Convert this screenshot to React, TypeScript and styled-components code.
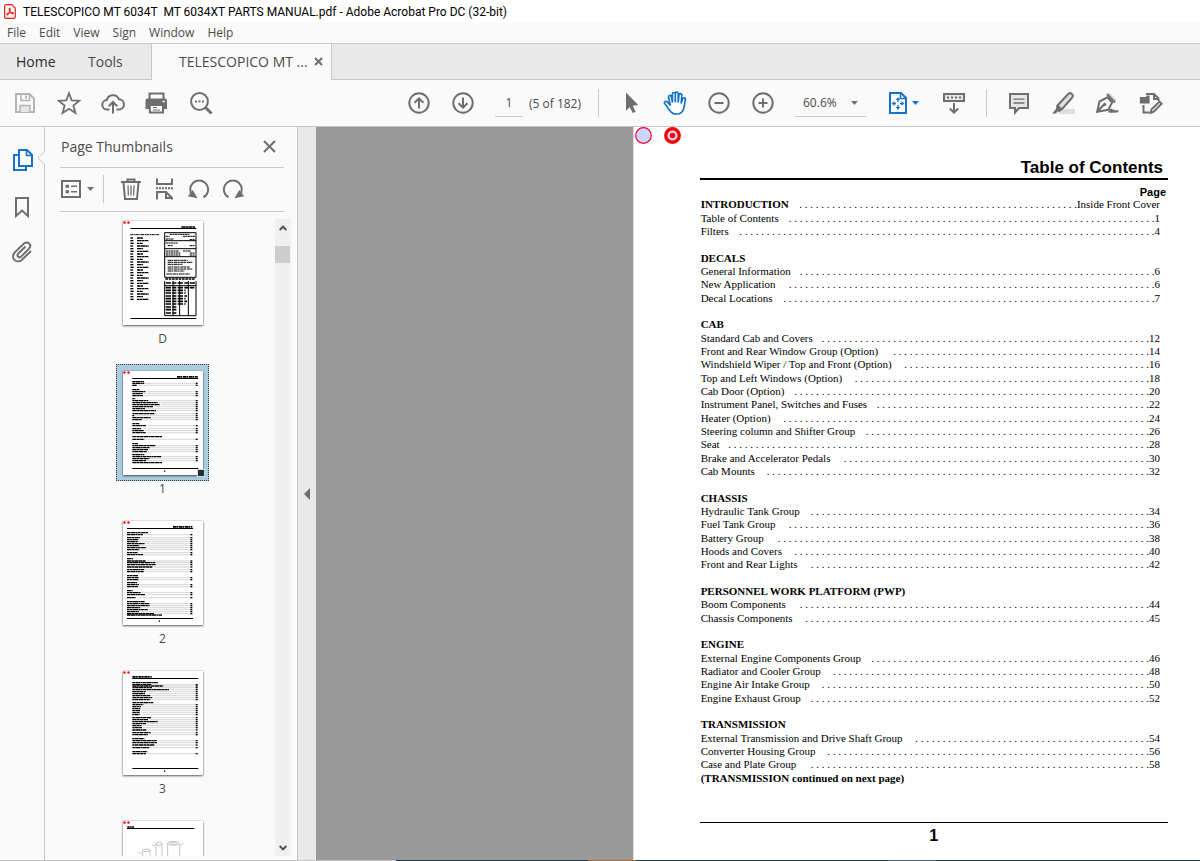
import React from "react";
import styled, { createGlobalStyle, css } from "styled-components";

const ui = `"Open Sans", "Noto Sans", sans-serif`;
const caption = `Roboto, "Open Sans", sans-serif`;
const arial = `"Liberation Sans", Arial, sans-serif`;
const times = `"Liberation Serif", "Times New Roman", serif`;

const color = {
  chrome: "#fafafa",
  bar: "#e9e9e9",
  line: "#c8c8c8",
  icon: "#6e6e6e",
  blue: "#1473c8",
  text: "#4b4b4b",
  canvas: "#999999",
};

const GlobalStyle = createGlobalStyle`
  *, *::before, *::after { box-sizing: border-box; }
  body { margin: 0; font-family: ${ui}; color: ${color.text}; overflow: hidden; }
  button, input, select { font: inherit; color: inherit; border: 0; padding: 0; margin: 0; background: none; border-radius: 0; }
  ul, ol { list-style: none; margin: 0; padding: 0; }
  h1, h2, h3, p { margin: 0; font: inherit; }
  a { color: inherit; text-decoration: none; }
  svg { display: block; }
`;

/* ---------- window frame ---------- */

const Window = styled.div`
  display: flex;
  flex-direction: column;
  height: 100vh;
  background: ${color.chrome};
`;

const TitleBar = styled.header`
  display: flex;
  align-items: center;
  gap: 7px;
  height: 23px;
  padding-left: 4px;
  background: #fff;
  color: #000;
  font-family: ${caption};
  font-size: 12px;
  white-space: pre;
`;

const MenuBar = styled.nav`
  display: flex;
  align-items: center;
  gap: 13px;
  height: 20px;
  padding: 0 0 2px 7px;
  font-size: 12px;
`;

const TabBar = styled.div`
  display: flex;
  height: 37px;
  border-top: 1px solid ${color.line};
  background: ${color.bar};
`;

const Tab = styled.button<{ $width: number; $dark?: boolean }>`
  width: ${(p) => p.$width}px;
  border-bottom: 1px solid ${color.line};
  font-size: 14px;
  text-align: left;
  color: ${(p) => (p.$dark ? "#2b2b2b" : color.text)};
  padding-left: 16px;
`;

const DocumentTab = styled.div`
  display: flex;
  align-items: center;
  justify-content: space-between;
  width: 181px;
  padding: 0 8px 2px 27px;
  border-left: 1px solid ${color.line};
  border-right: 1px solid ${color.line};
  background: ${color.chrome};
  font-size: 14px;
`;

const TabRest = styled.div`
  flex: 1;
  border-bottom: 1px solid ${color.line};
`;

const Toolbar = styled.div`
  display: flex;
  align-items: center;
  justify-content: space-between;
  height: 47px;
  padding: 0 27px 0 3px;
  border-bottom: 1px solid ${color.line};
`;

const ToolGroup = styled.div`
  display: flex;
  align-items: center;
`;

const ToolButton = styled.button<{ $active?: boolean; $dim?: boolean }>`
  display: flex;
  align-items: center;
  justify-content: center;
  width: 44px;
  height: 36px;
  color: ${(p) => (p.$active ? color.blue : p.$dim ? "#b4b4b4" : color.icon)};
`;

const PlainButton = styled.button`
  display: flex;
  align-items: center;
  justify-content: center;
  color: ${color.icon};
`;

const Separator = styled.span<{ $left: number; $right: number }>`
  width: 1px;
  height: 28px;
  margin: 0 ${(p) => p.$right}px 0 ${(p) => p.$left}px;
  background: ${color.line};
`;

const field = css`
  height: 28px;
  border-bottom: 1px solid ${color.line};
  font-size: 12px;
  outline: 0;
`;

const PageField = styled.input`
  ${field}
  width: 28px;
  margin-left: 10px;
  text-align: center;
`;

const PageCount = styled.span`
  width: 50px;
  margin-left: 6px;
  font-size: 12px;
  white-space: nowrap;
`;

const ZoomBox = styled.div`
  display: grid;
  align-items: center;
  width: 71px;
  margin: 0 16px 0 10px;
  & > * { grid-area: 1 / 1; }
  & > svg { justify-self: end; margin-right: 8px; pointer-events: none; color: ${color.icon}; }
`;

const ZoomSelect = styled.select`
  ${field}
  appearance: none;
  width: 100%;
  padding-left: 8px;
`;

const FitButton = styled(ToolButton)`
  gap: 5px;
  margin-right: 6px;
`;

/* ---------- left side ---------- */

const Workspace = styled.div`
  display: flex;
  flex: 1;
  min-height: 0;
`;

const Rail = styled.nav`
  position: relative;
  display: flex;
  flex-direction: column;
  align-items: center;
  flex: 0 0 45px;
  gap: 22px;
  padding-top: 21px;
  border-right: 1px solid ${color.line};
`;

const RailButton = styled.button<{ $active?: boolean }>`
  display: flex;
  color: ${(p) => (p.$active ? color.blue : color.icon)};
`;

const Notch = styled.svg`
  position: absolute;
  right: -1px;
  top: 24px;
`;

const Panel = styled.aside`
  display: flex;
  flex-direction: column;
  flex: 0 0 253px;
  min-height: 0;
  border-right: 1px solid ${color.line};
`;

const PanelHeader = styled.div`
  display: flex;
  align-items: center;
  justify-content: space-between;
  height: 41px;
  margin: 0 13px 0 15px;
  padding: 0 8px 2px 1px;
  border-bottom: 1px solid ${color.line};
  font-size: 14px;
`;

const PanelTools = styled.div`
  display: flex;
  align-items: center;
  height: 44px;
  margin: 0 13px 0 15px;
  padding: 0 0 2px 1px;
  border-bottom: 1px solid ${color.line};
`;

const OptionsButton = styled(PlainButton)`
  gap: 6px;
`;

const PanelToolRow = styled.div`
  display: flex;
  gap: 10px;
`;

const ThumbArea = styled.div`
  display: flex;
  flex: 1;
  min-height: 0;
  margin-bottom: 4px;
`;

const ThumbList = styled.ul`
  flex: 1;
  overflow: hidden;
  padding: 2px 0 0 5px;
`;

const ThumbItem = styled.li`
  display: flex;
  flex-direction: column;
  align-items: center;
  padding-bottom: 17px;
  font-size: 12px;
  line-height: 16px;
`;

const ThumbFrame = styled.button<{ $selected?: boolean }>`
  position: relative;
  padding: 6px 5px 5px 6px;
  border: 1px dotted ${(p) => (p.$selected ? "#333" : "transparent")};
  background: ${(p) => (p.$selected ? "#abcde0" : "none")};
`;

const Sheet = styled.svg`
  width: 80px;
  height: 104px;
  background: #fff;
  box-shadow: 0 0 1px rgba(0, 0, 0, 0.4), 0 1px 2px rgba(0, 0, 0, 0.6);
`;

const ViewHandle = styled.span`
  position: absolute;
  right: 3px;
  bottom: 3px;
  width: 8px;
  height: 8px;
  border: 1px solid #c8dcea;
  background: #2b2b2b;
`;

const ScrollTrack = styled.div`
  display: flex;
  flex-direction: column;
  width: 16px;
  margin: 7px 6px 0 0;
  background: #f0f0f0;
`;

const ScrollButton = styled(PlainButton)`
  height: 17px;
  color: #505050;
`;

const ScrollThumb = styled.div`
  flex: 0 0 17px;
  margin: 10px 1px auto 0;
  background: #cdcdcd;
`;

const PanelHandle = styled.button`
  display: flex;
  align-items: center;
  justify-content: center;
  flex: 0 0 18px;
  background: #e8e8e8;
  color: ${color.icon};
`;

/* ---------- document ---------- */

const Canvas = styled.main`
  display: flex;
  flex: 1;
  min-width: 0;
  background: ${color.canvas};
`;

const Backdrop = styled.div`
  flex: 317 1 0;
`;

const Paper = styled.article`
  display: flex;
  flex-direction: column;
  flex: 567 1 0;
  min-width: 0;
  border-left: 1px solid #dcdcdc;
  background: #fff;
  color: #000;
`;

const Marks = styled.div`
  display: flex;
  gap: 12px;
  padding-left: 1px;
`;

const SheetBody = styled.div`
  display: flex;
  flex-direction: column;
  flex: 1;
  margin: 14px 32px 14px 66px;
`;

const DocTitle = styled.h1`
  padding-right: 5px;
  border-bottom: 2px solid #000;
  font: bold 17px/20px ${arial};
  text-align: right;
`;

const PageHeading = styled.p`
  margin-top: 6px;
  padding-right: 2px;
  font: bold 11px/12px ${arial};
  text-align: right;
`;

const Toc = styled.ol`
  display: grid;
  grid-template-columns: minmax(0, 1fr);
  grid-auto-rows: 1fr;
  flex: 1;
  padding: 0 8px 0 1px;
  font: 11px/13px ${times};
`;

const TocRow = styled.li<{ $bold?: boolean }>`
  display: flex;
  align-items: center;
  white-space: pre;
  & > a:first-child { font-weight: ${(p) => (p.$bold ? "bold" : "normal")}; }
`;

const Leader = styled.span`
  margin-left: auto;
`;

const PageFoot = styled.footer`
  margin-top: 37px;
  padding-top: 3px;
  border-top: 1px solid #000;
  font: bold 16px/20px ${arial};
  text-align: center;
`;

const BottomEdge = styled.div`
  height: 1px;
  background: linear-gradient(
    to right,
    #c4c4c4 33%, #1c3745 33% 49%, #b0682c 49% 53%, #1c3745 53% 74%, #4c6068 74% 78%, #1c3745 78%
  );
`;

/* ---------- icons ---------- */

const Icon = ({ children, w = 24, h = 24, sw = 2 }: { children: React.ReactNode; w?: number; h?: number; sw?: number }) => (
  <svg width={w} height={h} viewBox={`0 0 ${w} ${h}`} fill="none" stroke="currentColor" strokeWidth={sw} aria-hidden="true">
    {children}
  </svg>
);

const Caret = () => (
  <Icon w={7} h={4}><path d="M0 0h7L3.500 4z" fill="currentColor" stroke="none" /></Icon>
);

const PdfIcon = () => (
  <svg width="12" height="15" viewBox="0 0 12 15" fill="none" stroke="#e0261b" aria-hidden="true">
    <path d="M2 .7h5.800l3.500 3.500v8.600a1.500 1.500 0 0 1-1.500 1.500H2A1.400 1.400 0 0 1 .6 12.900V2.100A1.400 1.400 0 0 1 2 .7z" fill="#fff1f0" strokeWidth="1.200" />
    <path d="M5.600 4.200c.9 0 .5 2.300-.2 4-.7 1.600-1.700 3-2.400 2.600-.7-.5.900-1.700 2.900-2.100 2-.4 3.500-.1 3.400.6-.1.800-1.900.2-3-1.200C5.200 6.800 4.900 4.200 5.600 4.200z" strokeWidth="1.100" />
  </svg>
);

const SaveIcon = () => (
  <Icon>
    <path d="M3 3h13.500L21 7.500V21H3z" />
    <path d="M8 3v6.500h8.500V4" strokeWidth="1.500" />
    <path d="M13 4.500v3" />
    <path d="M7 21v-6.500h10V21" fill="#e6e6e6" strokeWidth="1.500" />
  </Icon>
);

const StarIcon = () => (
  <Icon sw={1.8}><path d="M12 2.200l2.700 7.100 7.600.4-5.900 4.800 2 7.400L12 17.800l-6.400 4.100 2-7.400-5.900-4.800 7.600-.4z" /></Icon>
);

const CloudIcon = () => (
  <Icon>
    <path d="M8.500 18.500H6.200A4.700 4.700 0 0 1 5.800 9.100 6.400 6.400 0 0 1 18 8.300a5.100 5.100 0 0 1-.3 10.200h-2.200" />
    <path d="M12 22.500V11.500M7.800 15.300L12 11l4.200 4.300" />
  </Icon>
);

const PrintIcon = () => (
  <Icon>
    <path d="M4.500 8V2.500h14V8" />
    <path d="M3 7.500h17a2 2 0 0 1 2 2V18H.5V9.500a2 2 0 0 1 2-2z" fill="currentColor" stroke="none" />
    <path d="M4.800 14h13.200v7.500H4.800z" fill="#fff" />
    <path d="M8 16.500h4M8 19h7" strokeWidth="1.200" />
    <path d="M17.500 10.500H20" stroke="#fafafa" strokeWidth="1.400" />
  </Icon>
);

const FindIcon = () => (
  <Icon>
    <circle cx="10.500" cy="10.500" r="8.400" />
    <path d="M16.500 16.500l6 6" strokeWidth="3" />
    <path d="M6 10.500h2M9.500 10.500h2M13 10.500h2" />
  </Icon>
);

const UpIcon = () => (
  <Icon><circle cx="12" cy="12" r="9.700" /><path d="M12 17.500V7.500M7.600 11.700L12 7.300l4.400 4.400" /></Icon>
);

const DownIcon = () => (
  <Icon><circle cx="12" cy="12" r="9.700" /><path d="M12 6.500v10M7.600 12.300l4.400 4.400 4.400-4.400" /></Icon>
);

const CursorIcon = () => (
  <Icon><path d="M7 1.500v18.300l3.800-3.700 2.900 5.900 2.900-1.300-2.800-5.900 5.400-.8z" fill="currentColor" stroke="none" /></Icon>
);

const HandIcon = () => (
  <Icon sw={1.700}>
    <path
      d="M7.300 14.200L5.600 6.300c-.4-2 2.300-2.600 2.800-.6l1 5.300V3c0-2 2.900-2 2.900 0v7.500-8c0-1.900 2.900-1.900 2.900 0V11l.8-7.200c.3-1.800 3-1.600 2.800.4L18.200 12l1.500-4.200c.7-1.800 3.100-1 2.700.8L21 16.300c-.9 4.700-3.400 6.700-7.500 6.700-3 0-5-1-6.500-3.300l-5.300-7.200c-1-1.600.9-2.900 2.300-1.800z"
      fill="#fff"
      strokeLinejoin="round"
    />
  </Icon>
);

const MinusIcon = () => (
  <Icon><circle cx="12" cy="12" r="9.700" /><path d="M7.500 12h9" /></Icon>
);

const PlusIcon = () => (
  <Icon><circle cx="12" cy="12" r="9.700" /><path d="M7.500 12h9M12 7.500v9" /></Icon>
);

const FitIcon = () => (
  <Icon w={18} h={22}>
    <path d="M1 1h11l5 5v15H1z" />
    <path d="M11.500 1v5.500H17" strokeWidth="1.500" />
    <path d="M9 6v4M9 13v4M3.500 11.500h3.500M11 11.500h3.500" strokeWidth="1.300" />
    <path d="M6.700 8L9 5.200 11.300 8zM6.700 15L9 17.800l2.300-2.800zM5.500 9.200L2.600 11.500l2.900 2.300zM12.500 9.200l2.900 2.300-2.900 2.300z" fill="currentColor" stroke="none" />
  </Icon>
);

const ReadIcon = () => (
  <Icon>
    <path d="M2 3h20v7H2z" fill="#e6e6e6" />
    <path d="M5 6.500h14" strokeDasharray="2 2" />
    <path d="M12 12v9.500M7.800 17.500L12 21.700l4.200-4.200" />
  </Icon>
);

const CommentIcon = () => (
  <Icon>
    <path d="M3 3h18v14h-9l-4 4.500V17H3z" fill="#e6e6e6" />
    <path d="M6.500 8.200h11M6.500 12h11" strokeWidth="1.300" />
  </Icon>
);

const HighlightIcon = () => (
  <Icon>
    <path d="M12 18h12v5H6z" fill="#dedede" stroke="none" />
    <path d="M6.500 14.500L17.200 3c2.300-2.200 6 1 4 3.500L10.800 18.400z" fill="#e0e0e0" strokeWidth="2" />
    <path d="M5.500 14l5.500 5-2.500 2-2-.5-1.500 2H1l4-4.500z" fill="currentColor" stroke="none" />
  </Icon>
);

const SignIcon = () => (
  <Icon sw={2}>
    <path d="M14 1l8 8-3.500 2.500-7-6.500z" fill="#dedede" stroke="none" />
    <path d="M2.200 20.800L4.500 10.500 12.500 6.300l4.700 5.200-4 7.300z" />
    <path d="M12 3L20 11.500M2 21l7-7.500" />
    <circle cx="9.700" cy="13.400" r="1.600" fill="currentColor" stroke="none" />
    <path d="M14 21.500c1-2 2-3.500 2.500-2.700.5.900-1 2.700.5 2 1.500-.8 1.200-1.700 1.800-1.200.6.500-.3 1.500 1 1.200 1.200-.3 1-1 3.700-.3" />
  </Icon>
);

const EditPageIcon = () => (
  <Icon>
    <path d="M8 4V3h7l4.500 4.500V10M15 3v5h4.500M4.500 14v7.500h6" />
    <path d="M1.500 6.500h5.500L8.500 5H10v7H1.500z" fill="currentColor" strokeWidth="1.200" />
    <path d="M11.500 22l1-3.700 8-7.800 2.200 2.200-7.800 8z" fill="#e0e0e0" strokeWidth="1.900" />
  </Icon>
);

const CloseIcon = ({ size, sw }: { size: number; sw: number }) => (
  <Icon w={size} h={size} sw={sw}><path d={`M1 1l${size - 2} ${size - 2}M${size - 1} 1L1 ${size - 1}`} /></Icon>
);

const PagesIcon = () => (
  <Icon w={22} h={24}>
    <path d="M8 7H3v15h12v-3" />
    <path d="M8 2h8l5 5v11H8z" fill="#fff" />
    <path d="M15.500 2v5.500H21" strokeWidth="1.600" />
  </Icon>
);

const BookmarkIcon = () => (
  <Icon w={20} h={24}><path d="M4 4h12v18l-6-5.500L4 22z" /></Icon>
);

const ClipIcon = () => (
  <Icon w={22} h={24}>
    <path d="M14.500 6.500l-7.300 7.200c-2 2.200.8 4.900 2.900 2.900l7.900-8c3.500-4-1.400-8-5-5L3.800 12.400c-5 5.400 1.700 12 7.200 7.300L20 11" />
  </Icon>
);

const OptionsIcon = () => (
  <Icon w={20} h={18}>
    <path d="M1 1h18v16H1z" />
    <path d="M4.500 6.200h3.500M4.500 11.800h3.500" strokeWidth="3" />
    <path d="M10 6.200h6M10 11.800h6" strokeWidth="1.600" />
  </Icon>
);

const TrashIcon = () => (
  <Icon>
    <path d="M2 5h20M8.500 4.500V2.500h7v2M4.500 5.500L6 22h12l1.500-16.500" />
    <path d="M9 8.500l.4 10M12 8.500v10M15 8.500l-.4 10" strokeWidth="1.300" />
  </Icon>
);

const SplitIcon = () => (
  <Icon>
    <path d="M4 1.500V7h15V1.500M4 22.500V15h9l6 6v1.500M13 15.500V21h6" />
    <path d="M3 11.200h17" strokeDasharray="2 1" />
  </Icon>
);

const RotateLeftIcon = () => (
  <Icon>
    <path d="M16.500 20.300a9 9 0 1 0-12.700-4.500" />
    <path d="M.8 19.300L5.800 13l4.700 8.200z" fill="currentColor" stroke="none" />
  </Icon>
);

const RotateRightIcon = () => (
  <Icon>
    <path d="M7.500 20.300a9 9 0 1 1 12.700-4.500" />
    <path d="M23.200 19.300L18.200 13l-4.700 8.200z" fill="currentColor" stroke="none" />
  </Icon>
);

/* ---------- thumbnail drawings (three units to a pixel) ---------- */

type Line = [y: number, width: number];

const dashes = ["9 1 14 1 6 1", "13 1 7 1 11 1", "6 1 10 1 16 1"];

const Corner = () => (
  <g fill="#f00">
    <circle cx="4.500" cy="4.500" r="3.600" />
    <circle cx="16.500" cy="4.500" r="3.600" />
  </g>
);

const TocSheet = ({ left, title, lines, heads }: { left: number; title: [number, number]; lines: Line[]; heads: Line[] }) => {
  const right = left + 196;
  return (
    <Sheet viewBox="0 0 240 312" aria-hidden="true">
      <Corner />
      <g stroke="#000" strokeWidth="4">
        <path d={`M${title[0]} 17.500H${title[1]}`} strokeWidth="5" strokeDasharray="10 1 5 2" />
        <path d={`M${left} 22.500H${right + 2}M${left} 292.500H${right + 2}`} strokeWidth="3" />
        <path d={`M${left + 97} 298v5`} strokeWidth="3" />
        {heads.map(([y, w], i) => (
          <path key={y} d={`M${left} ${y}h${w}`} strokeDasharray={dashes[i % 3]} />
        ))}
      </g>
      {lines.map(([y, w], i) => (
        <g key={y} stroke="#000" strokeWidth="4">
          <path d={`M${left + w + 3} ${y}H${right - 8}`} stroke="#dedede" />
          <path d={`M${left} ${y}h${w}`} strokeDasharray={dashes[i % 3]} />
          <path d={`M${right - 6} ${y}h6`} />
        </g>
      ))}
    </Sheet>
  );
};

const codeRows = Array.from({ length: 24 }, (_, i) => [51 + i * 8, 18 + ((i * 17) % 34)]);

const DecimalSheet = () => (
  <Sheet viewBox="0 0 240 312" aria-hidden="true">
    <Corner />
    <g stroke="#000" fill="none" strokeWidth="3">
      <path d="M22 22.500h198M22 292.500h198" />
      <path d="M175 18h41" strokeWidth="4" strokeDasharray="12 1 7 1" />
      <path d="M22 41h86" strokeDasharray="9 2 4 1" />
      {codeRows.map(([y, w], i) => (
        <g key={y} strokeWidth="4">
          <path d={`M22 ${y}h${8 + (i % 3)}`} />
          <path d={`M42 ${y}h${w}`} strokeDasharray={dashes[i % 3]} />
        </g>
      ))}
      <path d="M125 35h94v134h-94zM125 59h94M125 83h94M125 107h94" />
      <path d="M140 40h60M128 46h12M180 46h36M128 54h24M200 56h16M128 66h36M134 74h16M200 74h16M128 90h40M180 90h24M128 96h44M200 96h16M128 102h44M200 102h16" strokeDasharray="8 1 5 1" />
      <path d="M134 118h60M134 124h74M134 130h44M134 138h66M134 144h74M134 150h50M130 159h70" strokeDasharray="10 1 6 2" />
      <path d="M127 174h90" strokeWidth="4" strokeDasharray="8 2" />
      <path d="M125 180v104h94V180M150 180v104M170 180v104M196 180v104M125 194h94" />
      <path d="M128 186h88M128 200h86M128 208h60M128 216h60M128 225h64M128 233h60M128 241h64M128 249h60M128 258h36M128 266h36M128 276h36" strokeWidth="5" strokeDasharray="16 4 12 4" />
    </g>
  </Sheet>
);

const FilterSheet = () => (
  <Sheet viewBox="0 0 240 312" aria-hidden="true">
    <Corner />
    <g stroke="#000" fill="none" strokeWidth="3">
      <path d="M12 22.500h202" />
      <path d="M13 18h20" strokeWidth="4" strokeDasharray="6 1" />
    </g>
    <g stroke="#8a8a8a" fill="none" strokeWidth="1.500">
      <ellipse cx="70" cy="88" rx="11" ry="4" />
      <path d="M59 88v60M81 88v60" />
      <ellipse cx="108" cy="68" rx="9" ry="5" />
      <path d="M99 68v60M117 68v60" />
      <ellipse cx="151" cy="67" rx="17" ry="6" />
      <ellipse cx="151" cy="67" rx="10" ry="3" />
      <path d="M134 67v60M170 67v60M46 94l10 4M86 70l10 6M182 66l-10 8" />
    </g>
  </Sheet>
);

const sheetOne = {
  left: 28, title: [162, 224] as [number, number],
  heads: [[32, 35], [56, 21], [83, 9], [158, 21], [197, 89], [218, 17], [251, 36], [275, 89]] as Line[],
  lines: [[37, 36], [43, 14], [62, 39], [68, 32], [74, 32], [89, 48], [95, 76], [101, 83], [107, 62], [113, 38], [119, 71], [128, 66], [134, 6], [140, 56], [146, 28], [164, 42], [173, 26], [179, 34], [185, 40], [205, 36], [224, 69], [230, 52], [236, 47], [242, 44], [257, 87], [263, 51], [269, 41]] as Line[],
};

const sheetTwo = {
  left: 12, title: [150, 208] as [number, number],
  heads: [[35, 63], [113, 18], [164, 33], [185, 30], [209, 17], [242, 54], [282, 105]] as Line[],
  lines: [[41, 48], [50, 39], [56, 35], [62, 34], [68, 53], [74, 37], [80, 58], [86, 37], [95, 32], [101, 48], [120, 57], [125, 85], [131, 86], [138, 76], [146, 52], [152, 50], [170, 36], [176, 34], [191, 36], [197, 34], [215, 42], [221, 54], [230, 26], [248, 67], [254, 68], [260, 40], [266, 62], [272, 36], [278, 82]] as Line[],
};

const sheetThree = {
  left: 28, title: [28, 86] as [number, number],
  heads: [[35, 77], [95, 63], [203, 36], [242, 45]] as Line[],
  lines: [[41, 58], [45, 93], [50, 59], [56, 110], [62, 40], [68, 38], [74, 54], [80, 60], [86, 54], [101, 33], [107, 26], [113, 24], [119, 23], [125, 23], [131, 22], [140, 57], [146, 48], [152, 77], [158, 41], [164, 28], [170, 29], [177, 43], [185, 56], [191, 47], [209, 73], [215, 74], [222, 66], [230, 51], [248, 41]] as Line[],
};

const thumbnails = [
  { name: "D", label: "D", drawing: <DecimalSheet /> },
  { name: "1", label: "1", drawing: <TocSheet {...sheetOne} />, selected: true },
  { name: "2", label: "2", drawing: <TocSheet {...sheetTwo} /> },
  { name: "3", label: "3", drawing: <TocSheet {...sheetThree} /> },
  { name: "4", drawing: <FilterSheet /> },
];

/* ---------- contents ---------- */

type Entry = { text?: string; page?: string; dots?: number; bold?: boolean };
const h = (text: string, page?: string, dots?: number): Entry => ({ text, page, dots, bold: true });
const e = (text: string, page: string, dots: number): Entry => ({ text, page, dots });
const gap: Entry = {};

/* each entry: title, page, number of leader dots */
const contents: Entry[] = [
  h("INTRODUCTION", "Inside Front Cover", 51),
  e("Table of Contents", "1", 67),
  e("Filters", "4", 76),
  gap,
  h("DECALS"),
  e("General Information", "6", 65),
  e("New Application", "6", 67),
  e("Decal Locations", "7", 68),
  gap,
  h("CAB"),
  e("Standard Cab and Covers", "12", 60),
  e("Front and Rear Window Group (Option)", "14", 47),
  e("Windshield Wiper / Top and Front (Option)", "16", 45),
  e("Top and Left Windows (Option)", "18", 54),
  e("Cab Door (Option)", "20", 65),
  e("Instrument Panel, Switches and Fuses", "22", 50),
  e("Heater (Option)", "24", 67),
  e("Steering column and Shifter Group", "26", 52),
  e("Seat", "28", 77),
  e("Brake and Accelerator Pedals", "30", 56),
  e("Cab Mounts", "32", 70),
  gap,
  h("CHASSIS"),
  e("Hydraulic Tank Group", "34", 62),
  e("Fuel Tank Group", "36", 66),
  e("Battery Group", "38", 68),
  e("Hoods and Covers", "40", 65),
  e("Front and Rear Lights", "42", 62),
  gap,
  h("PERSONNEL WORK PLATFORM (PWP)"),
  e("Boom Components", "44", 64),
  e("Chassis Components", "45", 63),
  gap,
  h("ENGINE"),
  e("External Engine Components Group", "46", 51),
  e("Radiator and Cooler Group", "48", 58),
  e("Engine Air Intake Group", "50", 60),
  e("Engine Exhaust Group", "52", 62),
  gap,
  h("TRANSMISSION"),
  e("External Transmission and Drive Shaft Group", "54", 43),
  e("Converter Housing Group", "56", 59),
  e("Case and Plate Group", "58", 62),
  h("(TRANSMISSION continued on next page)"),
];

export default function App() {
  return (
    <>
      <GlobalStyle />
      <Window>
        <TitleBar>
          <PdfIcon />
          {"TELESCOPICO MT 6034T  MT 6034XT PARTS MANUAL.pdf - Adobe Acrobat Pro DC (32-bit)"}
        </TitleBar>
        <MenuBar>
          {["File", "Edit", "View", "Sign", "Window", "Help"].map((m) => (
            <button key={m} type="button">{m}</button>
          ))}
        </MenuBar>
        <TabBar>
          <Tab $width={72} $dark type="button">Home</Tab>
          <Tab $width={79} type="button">Tools</Tab>
          <DocumentTab>
            <span>TELESCOPICO MT ...</span>
            <PlainButton type="button" aria-label="Close tab"><CloseIcon size={9} sw={2} /></PlainButton>
          </DocumentTab>
          <TabRest />
        </TabBar>
        <Toolbar>
          <ToolGroup>
            <ToolButton $dim type="button" aria-label="Save"><SaveIcon /></ToolButton>
            <ToolButton type="button" aria-label="Star file"><StarIcon /></ToolButton>
            <ToolButton type="button" aria-label="Upload to cloud"><CloudIcon /></ToolButton>
            <ToolButton type="button" aria-label="Print"><PrintIcon /></ToolButton>
            <ToolButton type="button" aria-label="Find text"><FindIcon /></ToolButton>
          </ToolGroup>
          <ToolGroup>
            <ToolButton type="button" aria-label="Previous page"><UpIcon /></ToolButton>
            <ToolButton type="button" aria-label="Next page"><DownIcon /></ToolButton>
            <PageField aria-label="Page number" defaultValue="1" />
            <PageCount>(5 of 182)</PageCount>
            <Separator $left={19} $right={10} />
            <ToolButton type="button" aria-label="Select"><CursorIcon /></ToolButton>
            <ToolButton $active type="button" aria-label="Pan"><HandIcon /></ToolButton>
            <ToolButton type="button" aria-label="Zoom out"><MinusIcon /></ToolButton>
            <ToolButton type="button" aria-label="Zoom in"><PlusIcon /></ToolButton>
            <ZoomBox>
              <ZoomSelect aria-label="Zoom level" defaultValue="60.6%">
                <option>60.6%</option>
                <option>100%</option>
              </ZoomSelect>
              <Caret />
            </ZoomBox>
            <FitButton $active type="button" aria-label="Fit page"><FitIcon /><Caret /></FitButton>
            <ToolButton type="button" aria-label="Read mode"><ReadIcon /></ToolButton>
            <Separator $left={10} $right={10} />
            <ToolButton type="button" aria-label="Comment"><CommentIcon /></ToolButton>
            <ToolButton type="button" aria-label="Highlight"><HighlightIcon /></ToolButton>
            <ToolButton type="button" aria-label="Sign"><SignIcon /></ToolButton>
            <ToolButton type="button" aria-label="Edit page"><EditPageIcon /></ToolButton>
          </ToolGroup>
        </Toolbar>
        <Workspace>
          <Rail>
            <RailButton $active type="button" aria-label="Page thumbnails"><PagesIcon /></RailButton>
            <RailButton type="button" aria-label="Bookmarks"><BookmarkIcon /></RailButton>
            <RailButton type="button" aria-label="Attachments"><ClipIcon /></RailButton>
            <Notch width="8" height="14" viewBox="0 0 8 14" aria-hidden="true">
              <path d="M8 0L1 7l7 7" fill={color.chrome} stroke={color.line} />
            </Notch>
          </Rail>
          <Panel>
            <PanelHeader>
              <h2>Page Thumbnails</h2>
              <PlainButton type="button" aria-label="Close panel"><CloseIcon size={13} sw={2} /></PlainButton>
            </PanelHeader>
            <PanelTools>
              <OptionsButton type="button" aria-label="Options"><OptionsIcon /><Caret /></OptionsButton>
              <Separator $left={9} $right={15} />
              <PanelToolRow>
                <PlainButton type="button" aria-label="Delete pages"><TrashIcon /></PlainButton>
                <PlainButton type="button" aria-label="Split"><SplitIcon /></PlainButton>
                <PlainButton type="button" aria-label="Rotate left"><RotateLeftIcon /></PlainButton>
                <PlainButton type="button" aria-label="Rotate right"><RotateRightIcon /></PlainButton>
              </PanelToolRow>
            </PanelTools>
            <ThumbArea>
              <ThumbList>
                {thumbnails.map((t) => (
                  <ThumbItem key={t.name}>
                    <ThumbFrame $selected={t.selected} type="button" aria-label={`Page ${t.name}`}>
                      {t.drawing}
                      {t.selected && <ViewHandle />}
                    </ThumbFrame>
                    {t.label}
                  </ThumbItem>
                ))}
              </ThumbList>
              <ScrollTrack>
                <ScrollButton type="button" aria-label="Scroll up">
                  <Icon w={8} h={6}><path d="M.7 5L4 1.600 7.300 5" /></Icon>
                </ScrollButton>
                <ScrollThumb />
                <ScrollButton type="button" aria-label="Scroll down">
                  <Icon w={8} h={6}><path d="M.7 1L4 4.400 7.300 1" /></Icon>
                </ScrollButton>
              </ScrollTrack>
            </ThumbArea>
          </Panel>
          <PanelHandle type="button" aria-label="Collapse panel">
            <Icon w={6} h={12}><path d="M6 0v12L0 6z" fill="currentColor" stroke="none" /></Icon>
          </PanelHandle>
          <Canvas>
            <Backdrop />
            <Paper>
              <Marks>
                <svg width="17" height="17" viewBox="0 0 17 17" aria-hidden="true">
                  <circle cx="8.500" cy="8.500" r="7.800" fill="#ccd5ff" stroke="#f5082a" strokeWidth="1.200" />
                </svg>
                <svg width="17" height="17" viewBox="0 0 17 17" aria-hidden="true">
                  <circle cx="8.500" cy="8.500" r="6.700" fill="#dfe0ff" stroke="#f00" strokeWidth="3.400" />
                  <circle cx="8.500" cy="8.500" r="2.800" fill="#f00" />
                </svg>
              </Marks>
              <SheetBody>
                <DocTitle>Table of Contents</DocTitle>
                <PageHeading>Page</PageHeading>
                <Toc>
                  {contents.map((row, i) => (
                    <TocRow key={i} $bold={row.bold} aria-hidden={row.text ? undefined : true}>
                      {row.text && <a href="#toc">{row.text}</a>}
                      {row.dots && <Leader aria-hidden="true">{Array(row.dots).fill(".").join(" ")}</Leader>}
                      {row.page && <span>{row.page}</span>}
                    </TocRow>
                  ))}
                </Toc>
                <PageFoot>1</PageFoot>
              </SheetBody>
            </Paper>
          </Canvas>
        </Workspace>
        <BottomEdge />
      </Window>
    </>
  );
}
